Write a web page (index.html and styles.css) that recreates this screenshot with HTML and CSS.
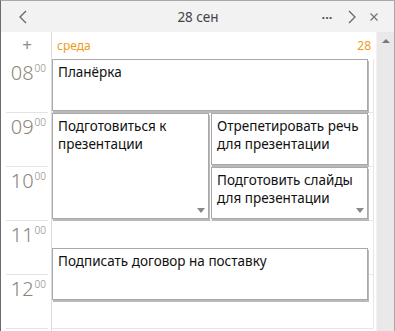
FILE: index.html
```html
<!doctype html>
<html lang="ru">
    <head>
        <meta charset="UTF-8" />
        <title>28 сен</title>
        <link rel="stylesheet" href="styles.css">
    </head>
    <body>
        <div class="window">
            <header class="titlebar">
                <button class="tb-btn" title="Назад">
                    <svg width="10" height="14" viewBox="0 0 10 14"><path d="M8 1 L2 7 L8 13" fill="none" stroke="#666" stroke-width="1.3"/></svg>
                </button>
                <div class="title">28 сен</div>
                <button class="tb-btn more" title="Ещё">...</button>
                <button class="tb-btn" title="Вперёд">
                    <svg width="10" height="14" viewBox="0 0 10 14"><path d="M2 1 L8 7 L2 13" fill="none" stroke="#666" stroke-width="1.3"/></svg>
                </button>
                <button class="tb-btn" title="Закрыть">
                    <svg width="10" height="10" viewBox="0 0 10 10"><path d="M1.5 1.5 L8.5 8.5 M8.5 1.5 L1.5 8.5" fill="none" stroke="#777" stroke-width="1.3"/></svg>
                </button>
            </header>
            <div class="content">
                <div class="gutter">
                    <div class="add">+</div>
                    <div class="hour">08<sup>00</sup></div>
                    <div class="hour">09<sup>00</sup></div>
                    <div class="hour">10<sup>00</sup></div>
                    <div class="hour">11<sup>00</sup></div>
                    <div class="hour">12<sup>00</sup></div>
                </div>
                <div class="day">
                    <div class="day-head">
                        <span>среда</span>
                        <span>28</span>
                    </div>
                    <div class="slots">
                        <div class="event ev-plan">Планёрка</div>
                        <div class="event ev-prep more-down">Подготовиться к презентации</div>
                        <div class="event ev-speech">Отрепетировать речь для презентации</div>
                        <div class="event ev-slides more-down">Подготовить слайды для презентации</div>
                        <div class="event ev-contract">Подписать договор на поставку</div>
                    </div>
                </div>
                <div class="scrollbar">
                    <div class="arrow-up"></div>
                </div>
            </div>
        </div>
    </body>
</html>
```

FILE: styles.css
```css
html, body {
    margin: 0;
    padding: 0;
}
body {
    font-family: "Noto Sans", "Open Sans", Arial, sans-serif;
    background-color: #fff;
    overflow: hidden;
}
.window {
    width: 395px;
    height: 331px;
    box-sizing: border-box;
    border-top: 1px solid #a9a9a9;
    border-left: 1px solid #6b6b6b;
    border-right: 1px solid #a9a9a9;
    display: flex;
    flex-direction: column;
    overflow: hidden;
}
.titlebar {
    height: 31px;
    flex: none;
    background-color: #f2f2f2;
    display: flex;
    align-items: center;
    padding: 0 9px 0 11px;
}
.tb-btn {
    background: transparent;
    border: none;
    padding: 0;
    width: 22px;
    height: 24px;
    display: flex;
    align-items: center;
    justify-content: center;
    color: #555;
    cursor: pointer;
}
.tb-btn.more {
    font-size: 13px;
    font-weight: bold;
    padding-bottom: 4px;
    margin-right: 3px;
}
.title {
    flex: 1;
    text-align: center;
    font-size: 13.5px;
    color: #444;
    padding-left: 46px;
}
.content {
    flex: 1;
    display: flex;
    min-height: 0;
}
.gutter {
    width: 50px;
    flex: none;
    border-right: 1px solid #dcdcdc;
}
.add {
    height: 27px;
    text-align: center;
    font-size: 17px;
    line-height: 25px;
    color: #8c8c8c;
    padding-left: 2px;
}
.hour {
    height: 54px;
    box-sizing: border-box;
    margin: 0 3px 0 5px;
    border-bottom: 1px solid #e3e3e3;
    text-align: right;
    padding: 2px 2px 0 0;
    font-size: 20px;
    line-height: 24px;
    color: #8c8479;
    font-weight: 300;
}
.hour sup {
    font-size: 10px;
    vertical-align: top;
    line-height: 14px;
    margin-left: 1px;
}
.day {
    flex: 1;
    display: flex;
    flex-direction: column;
}
.day-head {
    height: 27px;
    flex: none;
    display: flex;
    justify-content: space-between;
    align-items: center;
    padding: 0 5px;
    font-size: 12px;
    color: #f29b16;
}
.slots {
    display: grid;
    grid-template-columns: 1fr 1fr;
    grid-template-rows: repeat(10, 27px);
    column-gap: 2px;
    padding-right: 5px;
    border-right: 1px solid #e6e6e6;
    margin-right: 2px;
    background-image: repeating-linear-gradient(
        to bottom,
        transparent 0,
        transparent 53px,
        #e6e6e6 53px,
        #e6e6e6 54px
    );
}
.event {
    position: relative;
    background-color: #fff;
    border: 1px solid #a9a9a9;
    box-shadow: 1px 2px 0 #b9b9b9;
    margin-bottom: 2px;
    padding: 3px 5px;
    font-size: 13.5px;
    line-height: 18px;
    color: #111;
    overflow: hidden;
}
.ev-plan {
    grid-column: 1 / 3;
    grid-row: 1 / 3;
}
.ev-prep {
    grid-column: 1;
    grid-row: 3 / 7;
}
.ev-speech {
    grid-column: 2;
    grid-row: 3 / 5;
}
.ev-slides {
    grid-column: 2;
    grid-row: 5 / 7;
}
.ev-contract {
    grid-column: 1 / 3;
    grid-row: 8 / 10;
}
.more-down::after {
    content: "";
    position: absolute;
    right: 3px;
    bottom: 5px;
    border-left: 4px solid transparent;
    border-right: 4px solid transparent;
    border-top: 5px solid #888;
}
.scrollbar {
    width: 17px;
    flex: none;
    background-color: #e9e9e9;
    border-left: 1px solid #f3f3f3;
    display: flex;
    justify-content: center;
}
.arrow-up {
    margin-top: 7px;
    width: 0;
    height: 0;
    border-left: 4px solid transparent;
    border-right: 4px solid transparent;
    border-bottom: 4px solid #7a7a7a;
}
```
